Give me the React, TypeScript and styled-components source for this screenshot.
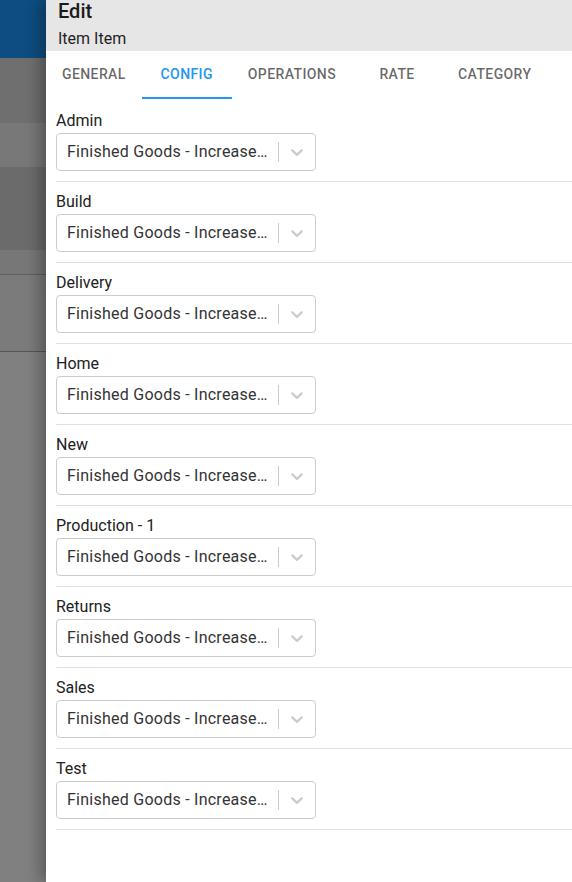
import React from 'react';
import styled, { createGlobalStyle } from 'styled-components';

const GlobalStyle = createGlobalStyle`
  html, body {
    margin: 0;
    padding: 0;
    height: 100%;
    overflow: hidden;
  }
  body {
    font-family: Roboto, "Liberation Sans", Arial, sans-serif;
  }
`;

const Page = styled.div`
  display: flex;
  height: 882px;
  width: 572px;
  overflow: hidden;
`;

const Backdrop = styled.div`
  width: 46px;
  flex-shrink: 0;
  display: flex;
  flex-direction: column;
  background: #808080;
`;

const Band = styled.div<{ $h: number; $bg: string; $line?: string }>`
  height: ${(p) => p.$h}px;
  background: ${(p) => p.$bg};
  border-bottom: ${(p) => (p.$line ? `1px solid ${p.$line}` : 'none')};
  flex-shrink: 0;
`;

const Drawer = styled.div`
  flex: 1;
  display: flex;
  flex-direction: column;
  background: #fff;
  box-shadow: -6px 0 14px rgba(0, 0, 0, 0.3);
  position: relative;
  min-width: 0;
`;

const Header = styled.div`
  background: #e6e6e6;
  padding: 1px 12px 0;
  height: 51px;
  box-sizing: border-box;
`;

const Title = styled.div`
  font-size: 20px;
  font-weight: 500;
  line-height: 20px;
  color: #1a1a1a;
`;

const Subtitle = styled.div`
  font-size: 16px;
  line-height: 24px;
  margin-top: 6px;
  color: #1f1f1f;
`;

const TabBar = styled.div`
  display: flex;
  height: 48px;
`;

const Tab = styled.div<{ $active?: boolean }>`
  min-width: 90px;
  padding: 0 16px;
  box-sizing: border-box;
  display: flex;
  align-items: center;
  justify-content: center;
  font-size: 14px;
  font-weight: 500;
  letter-spacing: 0.4px;
  text-transform: uppercase;
  color: ${(p) => (p.$active ? '#2196f3' : 'rgba(0, 0, 0, 0.6)')};
  border-bottom: 2px solid ${(p) => (p.$active ? '#2196f3' : 'transparent')};
`;

const List = styled.div`
  padding: 2px 0 0 10px;
`;

const Row = styled.div`
  padding: 8px 0 10px;
  border-bottom: 1px solid #e0e0e0;
`;

const Label = styled.div`
  font-size: 16px;
  line-height: 24px;
  color: #212121;
`;

const Control = styled.div`
  width: 260px;
  height: 38px;
  box-sizing: border-box;
  border: 1px solid #cccccc;
  border-radius: 4px;
  display: flex;
  align-items: center;
  background: #fff;
`;

const Value = styled.div`
  flex: 1;
  min-width: 0;
  padding: 0 10px 1px 10px;
  font-size: 16px;
  letter-spacing: 0.25px;
  color: #333333;
  white-space: nowrap;
  overflow: hidden;
  text-overflow: ellipsis;
`;

const Separator = styled.span`
  width: 1px;
  align-self: stretch;
  margin: 8px 0;
  background: #cccccc;
`;

const Indicator = styled.div`
  padding: 8px;
  display: flex;
  color: #cccccc;
`;

const Chevron = () => (
  <svg width="20" height="20" viewBox="0 0 20 20" fill="currentColor" aria-hidden="true">
    <path d="M4.516 7.548c0.436-0.446 1.043-0.481 1.576 0l3.908 3.747 3.908-3.747c0.533-0.481 1.141-0.446 1.574 0 0.436 0.445 0.408 1.197 0 1.615-0.406 0.418-4.695 4.502-4.695 4.502-0.217 0.223-0.502 0.335-0.787 0.335s-0.57-0.112-0.789-0.335c0 0-4.287-4.084-4.695-4.502s-0.436-1.17 0-1.615z" />
  </svg>
);

const bands = [
  { h: 58, bg: '#0e4d81' },
  { h: 65, bg: '#6f6f6f' },
  { h: 44, bg: '#787878' },
  { h: 83, bg: '#6b6b6b' },
  { h: 24, bg: '#777777', line: '#5f5f5f' },
  { h: 76, bg: '#7b7b7b', line: '#555555' },
];

const tabs = ['General', 'Config', 'Operations', 'Rate', 'Category'];

const locations = ['Admin', 'Build', 'Delivery', 'Home', 'New', 'Production - 1', 'Returns', 'Sales', 'Test'];

const App: React.FC = () => {
  return (
    <>
      <GlobalStyle />
      <Page>
        <Backdrop>
          {bands.map((b, i) => (
            <Band key={i} $h={b.h} $bg={b.bg} $line={b.line} />
          ))}
        </Backdrop>
        <Drawer>
          <Header>
            <Title>Edit</Title>
            <Subtitle>Item Item</Subtitle>
          </Header>
          <TabBar>
            {tabs.map((t) => (
              <Tab key={t} $active={t === 'Config'}>
                {t}
              </Tab>
            ))}
          </TabBar>
          <List>
            {locations.map((loc) => (
              <Row key={loc}>
                <Label>{loc}</Label>
                <Control>
                  <Value>Finished Goods - Increase Inventory</Value>
                  <Separator />
                  <Indicator>
                    <Chevron />
                  </Indicator>
                </Control>
              </Row>
            ))}
          </List>
        </Drawer>
      </Page>
    </>
  );
};

export default App;
